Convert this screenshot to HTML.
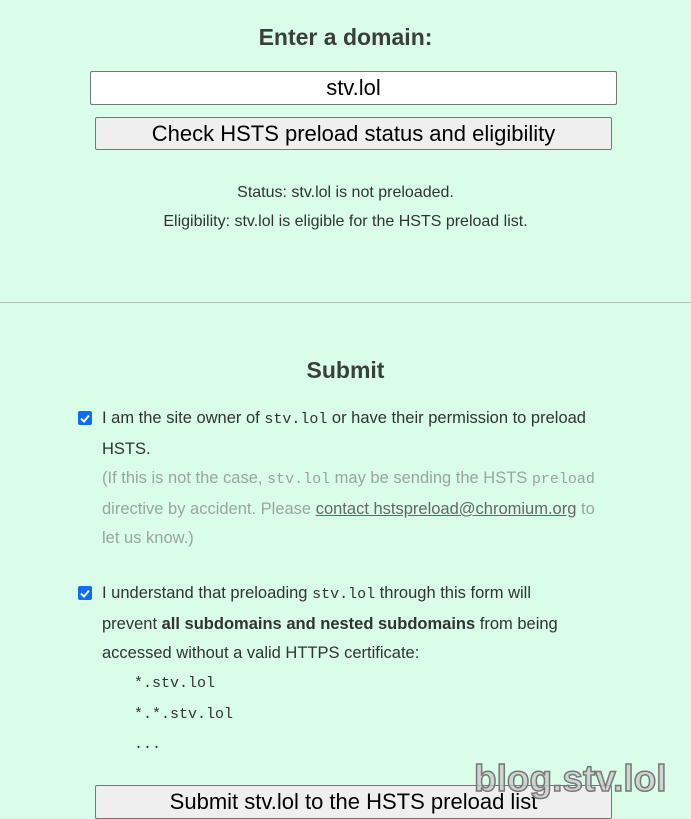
<!DOCTYPE html>
<html><head><meta charset="utf-8"><style>
body{margin:0;width:691px;height:809px;overflow:hidden;background:#d9fde9;font-family:"Liberation Sans","Noto Sans CJK SC",sans-serif;color:#333;position:relative}
.a{position:absolute}
h2{margin:0;font-size:23px;font-weight:bold;color:#3a3f3a;text-align:center;width:691px;position:absolute}
.box{position:absolute;border:1px solid #767676;box-sizing:border-box;background:#fff;text-align:center;font-size:22px;color:#000;font-family:"Liberation Sans",sans-serif}
.btn{background:#efefef;border-radius:2px}
.c{text-align:center;width:691px;font-size:16px;color:#333}
.t{left:102px;font-size:16.5px;line-height:29.6px;width:520px}
code{font-family:"Liberation Mono","Noto Sans CJK SC",monospace;font-size:15px}
.g{color:#9aa59f}
.cb{position:absolute;left:78px;width:14px;height:14px;background:#0b6cf5;border-radius:2px}
.cb svg{display:block}
</style></head><body>
<h2 style="top:24px">Enter a domain:</h2>
<div class="box" style="left:90px;top:71px;width:527px;height:34px;line-height:32px;border-radius:2px">stv.lol</div>
<div class="box btn" style="left:95px;top:117px;width:517px;height:33px;line-height:31px">Check HSTS preload status and eligibility</div>
<div class="a c" style="top:184px">Status: stv.lol is not preloaded.</div>
<div class="a c" style="top:213px">Eligibility: stv.lol is eligible for the HSTS preload list.</div>
<div class="a" style="left:0;top:302px;width:691px;height:1px;background:#b8bdb9"></div>
<h2 style="top:357px">Submit</h2>
<div class="cb" style="top:411px"><svg width="14" height="14"><path d="M3 7.5l3 3 5-6" stroke="#fff" stroke-width="2" fill="none"/></svg></div>
<div class="a t" style="top:404px">I am the site owner of <code>stv.lol</code> or have their permission to preload<br>HSTS.<br><span class="g">(If this is not the case, <code>stv.lol</code> may be sending the HSTS <code>preload</code><br>directive by accident. Please <u style="color:#666">contact hstspreload@chromium.org</u> to<br>let us know.)</span></div>
<div class="cb" style="top:586px"><svg width="14" height="14"><path d="M3 7.5l3 3 5-6" stroke="#fff" stroke-width="2" fill="none"/></svg></div>
<div class="a t" style="top:579px">I understand that preloading <code>stv.lol</code> through this form will<br>prevent <b>all subdomains and nested subdomains</b> from being<br>accessed without a valid HTTPS certificate:</div>
<div class="a t" style="left:134px;top:668px"><code>*.stv.lol</code><br><code>*.*.stv.lol</code><br><code>...</code></div>
<div class="box btn" style="left:95px;top:785px;width:517px;height:34px;line-height:32px">Submit stv.lol to the HSTS preload list</div>
<div class="a" style="left:474px;top:758px;font-size:37px;font-weight:bold;color:rgba(200,200,200,0.75);-webkit-text-stroke:1.5px #777;font-family:'Liberation Sans',sans-serif">blog.stv.lol</div>
</body></html>
